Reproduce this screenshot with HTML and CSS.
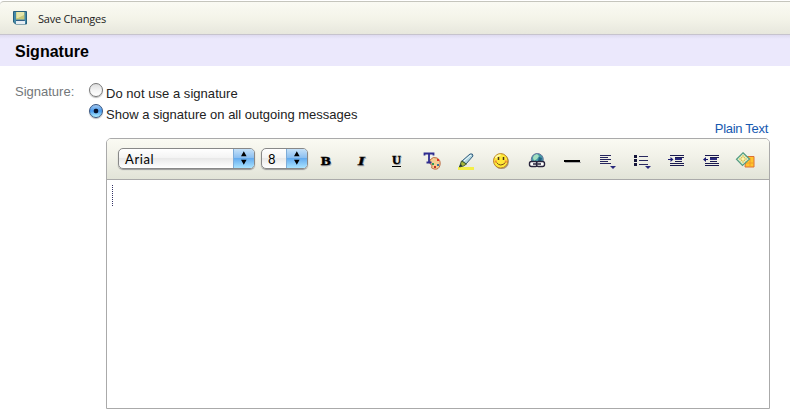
FILE: index.html
```html
<!DOCTYPE html>
<html lang="en">
<head>
<meta charset="utf-8">
<title>Signature</title>
<link rel="stylesheet" href="styles.css">
</head>
<body>
<header class="actions">
  <svg class="save-icon" viewBox="0 0 16 16"><path d="M.5 1.5h13v12.500H2.500l-2-2z" fill="#448aa9" stroke="#28617e"/><path d="M3 2h8.500v7.500H3z" fill="#c6c779"/><path d="M3.500 2h7.500v3L5 8H3.500z" fill="#e5e6aa"/><path d="M3 11h9v3H3z" fill="#e6edf3"/><path d="M3 10.500h8.500" stroke="#315f87"/></svg>
  <span class="save-label">Save Changes</span>
</header>
<h1 class="heading">Signature</h1>
<main class="form">
  <div class="label">Signature:</div>
  <div class="options">
    <div class="option"><span class="radio"></span><span class="option-text">Do not use a signature</span></div>
    <div class="option"><span class="radio radio-on"></span><span class="option-text option-long">Show a signature on all outgoing messages</span></div>
  </div>
</main>
<div class="mode"><a class="mode-link">Plain Text</a></div>
<section class="editor">
  <div class="toolbar">
    <div class="select font-select"><span class="value">Arial</span><span class="stepper"><svg viewBox="0 0 21 20"><path d="M8 8.3l2.8-5 2.8 5zM8 11.7h5.6l-2.8 5z"/></svg></span></div>
    <div class="select size-select"><span class="value">8</span><span class="stepper"><svg viewBox="0 0 21 20"><path d="M8 8.3l2.8-5 2.8 5zM8 11.7h5.6l-2.8 5z"/></svg></span></div>
    <div class="tools">
      <svg class="tool" viewBox="0 0 35 40"><text class="glyph shade" x="13.5" y="25.500" textLength="10" lengthAdjust="spacingAndGlyphs">B</text><text class="glyph" x="12.7" y="24.800" textLength="10" lengthAdjust="spacingAndGlyphs">B</text></svg>
      <svg class="tool" viewBox="0 0 35 40"><text class="glyph italic shade" x="15.5" y="25.500" textLength="7" lengthAdjust="spacingAndGlyphs">I</text><text class="glyph italic" x="14.7" y="24.800" textLength="7" lengthAdjust="spacingAndGlyphs">I</text></svg>
      <svg class="tool" viewBox="0 0 35 40"><text class="glyph under shade" x="14.8" y="25" textLength="9" lengthAdjust="spacingAndGlyphs">U</text><text class="glyph under" x="14" y="24.300" textLength="9" lengthAdjust="spacingAndGlyphs">U</text><path d="M14 26.5h9" stroke="#000"/></svg>
      <svg class="tool" viewBox="0 0 35 40"><path d="M17 20q3-4 7-2 4 2 3 7t-6 4q-4-1-2-3 0-2-2-2z" fill="#f3cd91" stroke="#bd704b"/><path d="M24 19h2v2h-2z" fill="#e52d24"/><path d="M19 23h2v2h-2z" fill="#319b55"/><path d="M24 24h2v2h-2z" fill="#37769c"/><path d="M21 26h2v2h-2z" fill="#bf3024"/><path d="M11.5 15.5v-2h9v2M16 13.5v9M13.5 22.5h5" fill="none" stroke="#2f2d90" stroke-width="1.8"/></svg>
      <svg class="tool" viewBox="0 0 35 40"><path d="M10 27h16v3H10z" fill="#f4ef48"/><path d="M14 21l8-7q3-1 3 2l-7 8z" fill="#b2d5df" stroke="#325d7d"/><path d="M16 21l7-6" stroke="#f1ffff"/><path d="M13.5 21l5 3-3 2-4 1z" fill="#a6b738" stroke="#405a34"/><path d="M11 27l2-3 1 2z" fill="#182b35"/></svg>
      <svg class="tool" viewBox="0 0 35 40"><circle cx="18.5" cy="21.7" r="7.4" fill="#a9967d"/><circle cx="17.7" cy="20.8" r="7.2" fill="#ffe837" stroke="#b9832b"/><path d="M12.5 18q2-3 5-3" fill="none" stroke="#fff9a8" stroke-width="1.5"/><path d="M15.5 17v3M20.5 17v3" stroke="#493319" stroke-width="1.5"/><path d="M13.5 22.5q4 5 9 0" fill="none" stroke="#7b4a19"/><path d="M11.8 21.5h2M21.8 21.5h2" stroke="#f28a37" stroke-width="2"/></svg>
      <svg class="tool" viewBox="0 0 35 40"><circle cx="19.3" cy="19.5" r="6" fill="#479ba5" stroke="#66719b"/><path d="M15 18q0-3 4-4l2 2-2 3-3 2z" fill="#a4dfc0"/><path d="M21 17l3 1-1 4-3-1z" fill="#225f83"/><rect x="11.5" y="21.5" width="8" height="5" rx="2" fill="#fff" stroke="#28243b" stroke-width="1.4"/><rect x="18.5" y="21.5" width="8" height="5" rx="2" fill="#fff" stroke="#28243b" stroke-width="1.4"/><path d="M15 24h8" stroke="#28243b" stroke-width="1.3"/></svg>
      <svg class="tool" viewBox="0 0 35 40"><path d="M12 22.5h16" stroke="#aaa" stroke-width="1"/><path d="M11 21h16" stroke="#000" stroke-width="2"/></svg>
      <svg class="tool" viewBox="0 0 35 40"><path d="M12 15.5h11M12 17.5h8M12 19.5h11M12 21.5h8M12 23.5h11" stroke="#26265e"/><path d="M22 26h6l-3 3z" fill="#28287c"/></svg>
      <svg class="tool" viewBox="0 0 35 40"><path d="M16 16.5h9M16 20.5h9M16 24.5h9" stroke="#29295e"/><path d="M11 15h3v3h-3zM11 19h3v3h-3zM11 23h3v3h-3z" fill="#151539"/><path d="M22 26h6l-3 3z" fill="#28287c"/></svg>
      <svg class="tool" viewBox="0 0 35 40"><path d="M12 15.5h14M12 23.5h14M12 25.5h14M17 17.5h9M17 21.5h7" stroke="#191950"/><path d="M17 18h7v2h-7z" fill="#29297c"/><path d="M10 19.5h4" stroke="#191970"/><path d="M12.5 17l3 2.5-3 2.5z" fill="#191970"/></svg>
      <svg class="tool" viewBox="0 0 35 40"><path d="M12 15.5h14M12 23.5h14M12 25.5h14M17 17.5h9M17 21.5h7" stroke="#191950"/><path d="M17 18h7v2h-7z" fill="#29297c"/><path d="M11 19.5h4" stroke="#191970"/><path d="M13 17l-3 2.5 3 2.5z" fill="#191970"/></svg>
      <svg class="tool" viewBox="0 0 35 40"><path d="M18 16.5h8v10.5h-9z" fill="#ffc42c" stroke="#dd7034"/><path d="M22 18v8M18 23h7" stroke="#f29a29"/><path d="M15 12.8l6.5 6.3-7 6.4-6-6.3z" fill="#d8f0cf" stroke="#539b81" stroke-width="1.2"/><path d="M15 15v8M11 19h8M12.5 16.5l5 5M17.5 16.5l-5 5" stroke="#e9bd47"/><circle cx="15" cy="19" r="1.4" fill="#fff7a9"/></svg>
    </div>
  </div>
  <div class="canvas"><span class="caret"></span></div>
</section>
</body>
</html>
```
FILE: styles.css
```css
* { box-sizing: border-box; }
body { margin: 0; height: 418px; overflow: hidden; background: #fff; font: 13px "Liberation Sans", sans-serif; color: #222; }
.actions { height: 34px; display: flex; align-items: center; margin-top: 1px; padding: 0 0 0 13px; border-top: 1px solid #c5c5bd; border-bottom: 1px solid #c6c3cd; border-top-left-radius: 4px; background: linear-gradient(#fafaf3, #f4f4e9 50%, #e7e7dd); }
.save-icon { width: 16px; height: 16px; flex: none; }
.save-label { margin-left: 9px; font: 11px "Open Sans", sans-serif; letter-spacing: -.22px; color: #222; }
.heading { margin: 0; height: 31px; padding-left: 15px; font-size: 16px; line-height: 33px; color: #000; background: linear-gradient(#dedaf0, #ebe8fc 4px); }
.form { display: flex; height: 57px; padding: 15px 0 0 15px; }
.label { width: 74px; line-height: 21px; color: #73777a; letter-spacing: 0; }
.options { display: flex; flex-direction: column; }
.option { height: 21px; display: flex; align-items: flex-start; }
.radio { width: 14px; height: 14px; margin: 2px 3px 0 0; border: 1px solid #777; border-radius: 50%; background: linear-gradient(#ddd, #f3f3f3 50%, #fff); box-shadow: 0 1px 1px #bbb; }
.radio-on { border-color: #35537f; background: radial-gradient(circle at 50% 50%, #07142c 0 2px, transparent 2.7px), linear-gradient(#a1c7ef, #4799ed 50%, #b6f3ff); }
.option-text { line-height: 25px; letter-spacing: .04px; }
.option-long { letter-spacing: 0; }
.mode { height: 15px; padding-right: 22px; text-align: right; line-height: 12px; }
.mode-link { color: #1759b0; letter-spacing: -.3px; }
.editor { width: 664px; height: 271px; margin-left: 106px; border: 1px solid #aaa; border-radius: 5px 5px 0 0; overflow: hidden; }
.toolbar { height: 41px; display: flex; align-items: flex-start; padding-left: 11px; border-bottom: 1px solid #aaa; background: linear-gradient(#fafaf3, #f1f1e8 45%, #e2e4d8); }
.select { height: 21px; margin-top: 9px; display: flex; justify-content: space-between; border: 1px solid #888; border-radius: 5px; overflow: hidden; background: linear-gradient(#fff, #f4f4f4 45%, #e9e9e9 50%, #fff); box-shadow: 0 1px 1px #999; }
.font-select { width: 137px; }
.size-select { width: 47px; margin-left: 6px; }
.value { padding-left: 6px; font: 13px/21px Lato, sans-serif; letter-spacing: .6px; color: #000; }
.stepper { width: 21px; height: 19px; background: linear-gradient(#c5e1f8, #8dc0f1 45%, #65acef 50%, #a9e3ff); border-left: 1px solid #7eacd8; }
.stepper svg { display: block; width: 21px; height: 20px; margin: -1px 0 0 -1px; }
.tools { display: flex; }
.tool { display: block; width: 35px; height: 40px; margin-top: 1px; flex: none; }
.glyph { font: bold 13px "Liberation Serif", serif; fill: #000; stroke: #000; stroke-width: .4px; }
.italic { font-style: italic; }
.under { font-size: 12px; }
.shade { fill: #aaa; stroke: #aaa; }
.canvas { padding: 5px; }
.caret { display: block; height: 21px; width: 1px; background: repeating-linear-gradient(#333366 0 1px, transparent 1px 2px); }
```
